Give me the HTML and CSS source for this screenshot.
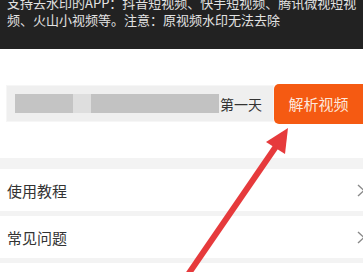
FILE: index.html
```html
<!DOCTYPE html>
<html>
<head>
  <link rel="stylesheet" href="styles.css">
</head>
<body>
  <div class="notice">
    <p>
      <span>支持去水印的APP：抖音短视频、快手短视频、腾讯微视短视</span>
      <span>频、火山小视频等。注意：原视频水印无法去除</span>
    </p>
  </div>

  <div class="search">
    <div class="search-input">
      <div class="blur">
        <span class="blur-block"></span>
        <span class="blur-block light"></span>
        <span class="blur-block wide"></span>
      </div>
      <span class="input-text">第一天</span>
    </div>
    <button class="parse-button">解析视频</button>
  </div>

  <div class="menu">
    <div class="menu-item">
      <span>使用教程</span>
      <svg class="chevron" width="8" height="13" viewBox="0 0 8 13"><path d="M1 1l6 5.5L1 12" fill="none" stroke="#888" stroke-width="1.4"/></svg>
    </div>
    <div class="menu-item">
      <span>常见问题</span>
      <svg class="chevron" width="8" height="13" viewBox="0 0 8 13"><path d="M1 1l6 5.5L1 12" fill="none" stroke="#888" stroke-width="1.4"/></svg>
    </div>
    <div class="menu-item"></div>
  </div>

  <svg class="arrow" width="363" height="272" viewBox="0 0 363 272">
    <line x1="277" y1="145" x2="187" y2="276" stroke="#e63a3c" stroke-width="6"/>
    <polygon points="288,128 266,142 285,154" fill="#e63a3c"/>
  </svg>
</body>
</html>
```

FILE: styles.css
```css
body {
  margin: 0;
  width: 363px;
  height: 272px;
  overflow: hidden;
  position: relative;
  background: #fff;
  font-family: "Noto Sans CJK SC", "Noto Sans", sans-serif;
}
.notice {
  height: 49px;
  background: #222;
  overflow: hidden;
  padding: 0 7px;
}
.notice p {
  margin: -6px 0 0 0;
  font-size: 13px;
  line-height: 17px;
  color: #e2e2e2;
}
.notice span {
  display: block;
  white-space: nowrap;
}
.search {
  display: flex;
  align-items: center;
  height: 109px;
  padding-left: 6px;
  box-sizing: border-box;
}
.search-input {
  flex: 1;
  display: flex;
  align-items: center;
  height: 37px;
  background: #efefef;
  border: 1px solid #f6f6f6;
  box-sizing: border-box;
  padding-left: 8px;
}
.blur {
  display: flex;
  height: 19px;
  width: 204px;
}
.blur-block {
  width: 58px;
  background: #c4c4c4;
}
.blur-block.light {
  width: 18px;
  background: #dedede;
}
.blur-block.wide {
  flex: 1;
  background: #c2c2c2;
}
.input-text {
  font-size: 14px;
  color: #333;
  margin-left: 1px;
}
.parse-button {
  width: 89px;
  height: 40px;
  border: none;
  border-radius: 5px 0 0 5px;
  background: #f55a12;
  color: #fde7dc;
  font-family: inherit;
  font-size: 15px;
  padding: 0;
}
.menu {
  background: #f3f3f3;
  padding-top: 11px;
  display: flex;
  flex-direction: column;
  gap: 5px;
}
.menu-item {
  height: 42px;
  background: #fff;
  display: flex;
  align-items: center;
  justify-content: space-between;
  padding-left: 7px;
  font-size: 15px;
  color: #333;
}
.chevron {
  margin-right: -2px;
}
.arrow {
  position: absolute;
  top: 0;
  left: 0;
}
```
